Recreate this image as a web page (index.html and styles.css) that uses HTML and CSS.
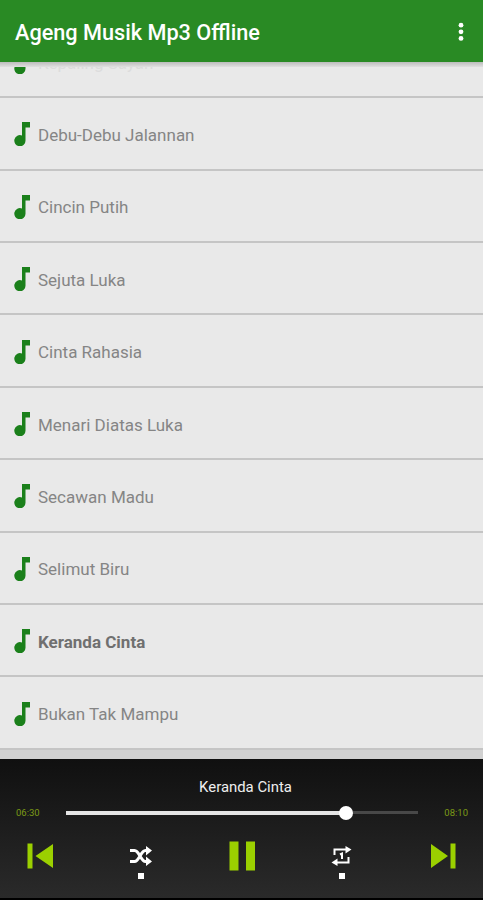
FILE: index.html
```html
<!DOCTYPE html>
<html lang="id">
<head>
    <meta charset="UTF-8">
    <meta name="viewport" content="width=device-width, initial-scale=1.0">
    <title>Ageng Musik Mp3 Offline</title>
    <link rel="stylesheet" href="styles.css">
</head>
<body>
    <!-- shared icon for every song row -->
    <svg class="sprite">
        <symbol id="note" viewBox="0 0 16 24">
            <path d="M8 0h8v5.500h-4.500v13A5.600 5.600 0 1 1 8 13.500z"/>
        </symbol>
    </svg>

    <header class="toolbar">
        <h1>Ageng Musik Mp3 Offline</h1>
        <svg class="menu" viewBox="0 0 6 20">
            <circle cx="3" cy="3.200" r="2.400"/>
            <circle cx="3" cy="9.800" r="2.400"/>
            <circle cx="3" cy="16.400" r="2.400"/>
        </svg>
    </header>

    <ul class="songs">
        <li class="song faded"><svg class="note"><use href="#note"/></svg><span>Kepaling Sayan</span></li>
        <li class="song"><svg class="note"><use href="#note"/></svg><span>Debu-Debu Jalannan</span></li>
        <li class="song"><svg class="note"><use href="#note"/></svg><span>Cincin Putih</span></li>
        <li class="song"><svg class="note"><use href="#note"/></svg><span>Sejuta Luka</span></li>
        <li class="song"><svg class="note"><use href="#note"/></svg><span>Cinta Rahasia</span></li>
        <li class="song"><svg class="note"><use href="#note"/></svg><span>Menari Diatas Luka</span></li>
        <li class="song"><svg class="note"><use href="#note"/></svg><span>Secawan Madu</span></li>
        <li class="song"><svg class="note"><use href="#note"/></svg><span>Selimut Biru</span></li>
        <li class="song playing"><svg class="note"><use href="#note"/></svg><span>Keranda Cinta</span></li>
        <li class="song"><svg class="note"><use href="#note"/></svg><span>Bukan Tak Mampu</span></li>
    </ul>

    <footer class="player">
        <div class="now-playing">Keranda Cinta</div>
        <div class="progress">
            <span class="time">06:30</span>
            <div class="track">
                <div class="elapsed" style="width: 79.5%"></div>
                <div class="thumb"></div>
            </div>
            <span class="time">08:10</span>
        </div>
        <div class="controls">
            <svg class="skip" viewBox="0 0 26 26">
                <path d="M.5.500h5v25h-5zM26 1v24L8.500 13z"/>
            </svg>
            <div class="mode">
                <svg viewBox="0 0 22 20">
                    <path class="line" d="M0 4.500h4.500c5 0 6 11 11 11h2M0 15.500h4.500c5 0 6-11 11-11h2"/>
                    <path d="M16 0 22 4.500 16 9.500zM16 10.500l6 5-6 4.500z"/>
                </svg>
                <i class="dot"></i>
            </div>
            <svg class="pause" viewBox="0 0 26 30">
                <path d="M.5.500h9v29h-9zM17 .5h9v29h-9z"/>
            </svg>
            <div class="mode">
                <svg viewBox="0 0 22 20">
                    <path class="line thin" d="M3.500 9V3.500H15M17.500 11v5.500H6M9 8.500l2-1V13"/>
                    <path d="M14.500 0 20.500 3.500 14.500 7.500zM6.500 12.500v7.500L.5 16.500z"/>
                </svg>
                <i class="dot"></i>
            </div>
            <svg class="skip" viewBox="0 0 26 26">
                <path d="M20.500.5h5v25h-5zM1 1v24l17-12z"/>
            </svg>
        </div>
    </footer>
</body>
</html>
```
FILE: styles.css
```css
* {
    box-sizing: border-box;
}

body {
    margin: 0;
    height: 900px;
    display: flex;
    flex-direction: column;
    font-family: Roboto, sans-serif;
    background-color: #d1d1d1;
    overflow: hidden;
}

.sprite {
    display: none;
}

.toolbar {
    flex: none;
    display: flex;
    align-items: center;
    justify-content: space-between;
    height: 67px;
    padding: 2px 19px 5px 15px;
    background: linear-gradient(#298a24 62px, #bcbcbc 62px, #e0e0e0);
    color: #fff;
}

.toolbar h1 {
    margin: 0;
    font-size: 21.7px;
    font-weight: 500;
}

.menu {
    width: 6px;
    height: 20px;
    fill: #fff;
}

/* list is scrolled to the end, so the first row is cut off */
.songs {
    flex: 1;
    min-height: 0;
    display: flex;
    flex-direction: column;
    justify-content: flex-end;
    margin: 0;
    padding: 0 0 9.2px;
    list-style: none;
    overflow: hidden;
}

.song {
    flex: none;
    display: flex;
    align-items: center;
    gap: 8px;
    height: 72.4px;
    padding: 2px 14px 0;
    background-color: #e9e9e9;
    border-bottom: 2px solid #c5c5c5;
    color: #858585;
    font-size: 17px;
}

.song span {
    padding-top: 1px;
}

.faded {
    color: #dcdcdc;
}

.playing {
    color: #707070;
    font-weight: bold;
}

.note {
    width: 16px;
    height: 24px;
    fill: #1b801b;
}

.player {
    flex: none;
    height: 141px;
    padding-top: 18px;
    background: linear-gradient(#101010, #2a2a2a);
    border-bottom: 2px solid #000;
}

.now-playing {
    height: 22px;
    padding-left: 8px;
    color: #eee;
    font-size: 14.9px;
    line-height: 21px;
    text-align: center;
}

.progress {
    display: flex;
    align-items: center;
    justify-content: space-between;
    height: 28px;
    padding: 0 15px 1px 16px;
}

.time {
    color: #7c9a16;
    font-size: 9.5px;
}

.track {
    display: flex;
    align-items: center;
    width: 352px;
    height: 3px;
    background-color: #484848;
}

.elapsed {
    height: 4px;
    background-color: #e4e4e4;
}

.thumb {
    flex: none;
    width: 14px;
    height: 14px;
    margin-left: -7px;
    border-radius: 50%;
    background-color: #fff;
}

.controls {
    display: flex;
    justify-content: space-between;
    padding: 14px 27px 0;
}

.skip {
    width: 26px;
    height: 26px;
    margin-top: 2px;
    fill: #9bd000;
}

.pause {
    width: 26px;
    height: 30px;
    fill: #9bd000;
}

.mode {
    display: flex;
    flex-direction: column;
    align-items: center;
    gap: 7px;
    padding-top: 5px;
    fill: #fff;
}

.mode svg {
    width: 22px;
    height: 20px;
}

.line {
    fill: none;
    stroke: #fff;
    stroke-width: 3;
}

.thin {
    stroke-width: 2;
}

.dot {
    width: 6px;
    height: 6px;
    background-color: #fff;
}
```
